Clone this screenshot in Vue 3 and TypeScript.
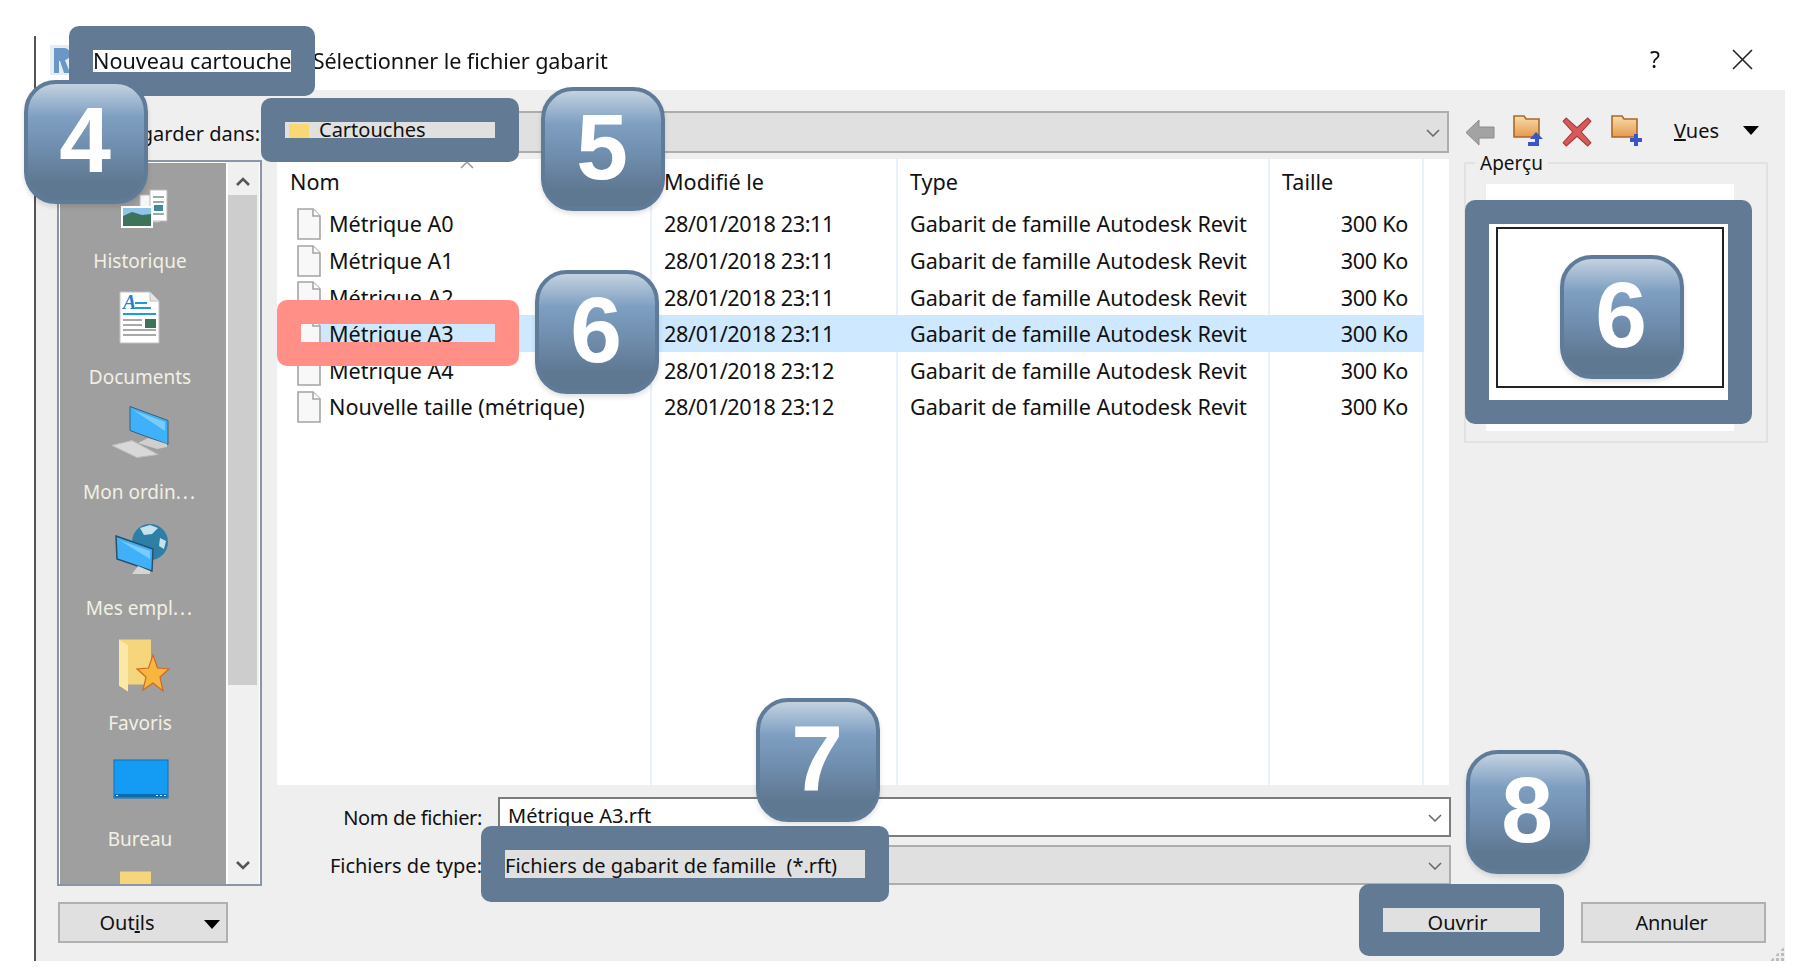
<script setup lang="ts">
interface FileRow {
    name: string;
    date: string;
    selected?: boolean;
}

const files: FileRow[] = [
    { name: "Métrique A0", date: "28/01/2018 23:11" },
    { name: "Métrique A1", date: "28/01/2018 23:11" },
    { name: "Métrique A2", date: "28/01/2018 23:11" },
    { name: "Métrique A3", date: "28/01/2018 23:11", selected: true },
    { name: "Métrique A4", date: "28/01/2018 23:12" },
    { name: "Nouvelle taille (métrique)", date: "28/01/2018 23:12" },
];

const badges = [
    { digit: "4", cls: "b-title" },
    { digit: "5", cls: "b-folder" },
    { digit: "6", cls: "b-file" },
    { digit: "6", cls: "b-preview" },
    { digit: "7", cls: "b-type" },
    { digit: "8", cls: "b-open" },
];

const frames = ["f-title", "f-folder", "f-file", "f-preview", "f-type", "f-open"];
</script>

<template>
    <div class="page">
        <div class="dialog">
            <header class="titlebar">
                <svg class="logo" width="22" height="30" viewBox="0 0 22 30">
                    <rect width="22" height="30" fill="#e6ecf4" />
                    <path d="M4 3h9a6 6 0 0 1 2 12l5 13h-6l-4-12H9v12H4z" fill="#6a96c8" />
                </svg>
                <span class="title-text">Nouveau cartouche - <span class="title-sub">Sélectionner le fichier gabarit</span></span>
                <span class="help">?</span>
                <svg class="close" width="21" height="21" viewBox="0 0 21 21">
                    <path d="M1 1l19 19M20 1L1 20" stroke="#222" stroke-width="1.6" fill="none" />
                </svg>
            </header>

            <div class="body">
                <div class="look-label"><span>Regarder dans:</span></div>
                <div class="combo look-combo">
                    <svg class="mini-folder" width="20" height="16" viewBox="0 0 20 16">
                        <path d="M0 0h20v16H0z" fill="#f8d775" />
                    </svg>
                    <span class="look-value">Cartouches</span>
                    <svg class="chevron" width="14" height="8" viewBox="0 0 14 8">
                        <path d="M1 1l6 6 6-6" fill="none" stroke="#666" stroke-width="1.5" />
                    </svg>
                </div>
                <div class="toolbar">
                    <svg width="30" height="27" viewBox="0 0 30 27">
                        <path d="M1 13.5L14 1v7h15v11H14v7z" fill="#a3a3a3" stroke="#8a8a8a" />
                    </svg>
                    <svg class="tool-folder" width="31" height="31" viewBox="0 0 31 31">
                        <defs>
                            <linearGradient id="folder-fill" x1="0" y1="0" x2="0" y2="1">
                                <stop offset="0" stop-color="#f8dcae" />
                                <stop offset="1" stop-color="#e69a4c" />
                            </linearGradient>
                        </defs>
                        <path d="M1 1h10l2 3h13v18H1z" fill="url(#folder-fill)" stroke="#a8682a" stroke-width="1.6" />
                        <path d="M23 17l7 7h-4v7H15v-4h7v-3h-5z" fill="#3a55c4" />
                    </svg>
                    <svg width="30" height="30" viewBox="0 0 28 28">
                        <path d="M4 1l10 9 10-9 3 3-9 10 9 10-3 3-10-9-10 9-3-3 9-10-9-10z" fill="#d9595a" stroke="#a33c3c" />
                    </svg>
                    <svg class="tool-folder new-folder" width="31" height="31" viewBox="0 0 31 31">
                        <path d="M1 1h10l2 3h13v18H1z" fill="url(#folder-fill)" stroke="#a8682a" stroke-width="1.6" />
                        <path d="M23 19h4v4h4v4h-4v4h-4v-4h-4v-4h4z" fill="#3a55c4" />
                    </svg>
                    <span class="views"><u>V</u>ues</span>
                    <span class="caret views-caret"></span>
                </div>

                <aside class="places">
                    <div class="places-list">
                        <div class="place">
                            <svg width="60" height="60" viewBox="0 0 60 60">
                                <path d="M30 24h20v27H30z" fill="#f6f6f6" stroke="#bbb" />
                                <path d="M40 19h17v31H40z" fill="#fff" stroke="#bbb" />
                                <path d="M43 26h11M43 31h11M43 43h11" stroke="#9aa" stroke-width="2" />
                                <path d="M44 34h9v6h-9z" fill="#3f8a9c" />
                                <rect x="11" y="35" width="32" height="22" fill="#fff" />
                                <path d="M13 37h28v8H13z" fill="#8ec6ea" />
                                <path d="M13 45l9-4 10 3 9-1v12H13z" fill="#3d7358" />
                            </svg>
                            <span>Historique</span>
                        </div>
                        <div class="place">
                            <svg width="60" height="60" viewBox="0 0 60 60">
                                <path d="M10 5h30l9 9v42H10z" fill="#fff" stroke="#c2c2c2" />
                                <path d="M40 5v9h9" fill="#e6e6e6" stroke="#c2c2c2" />
                                <text x="13" y="22" class="doc-a">A</text>
                                <path d="M25 16h12M25 21h16M13 27h33" stroke="#1f9ae0" stroke-width="2" />
                                <path d="M13 33h19M13 38h19M13 43h33M13 48h33" stroke="#a9a9a9" stroke-width="2" />
                                <path d="M35 32h11v9H35z" fill="#3d7358" />
                            </svg>
                            <span>Documents</span>
                        </div>
                        <div class="place">
                            <svg width="60" height="60" viewBox="0 0 60 60">
                                <path d="M20 4.5l38 14v24l-38-14z" fill="#3fb0fa" stroke="#3b5f78" />
                                <path d="M23 8l32 12v9z" fill="#78cbfb" />
                                <path d="M38 36l19 6v3l-10 2-19-6z" fill="#cfcfcf" />
                                <path d="M2 43.5l20-5 26 14-21 3z" fill="#d8d8d8" stroke="#bdbdbd" />
                            </svg>
                            <span>Mon ordin<b class="dots">...</b></span>
                        </div>
                        <div class="place">
                            <svg width="60" height="60" viewBox="0 0 60 60">
                                <circle cx="40" cy="24" r="18" fill="#2d7fa8" />
                                <path d="M30 10l10-3 8 3-6 6-8 1zM50 20l6 3-2 8-5-3z" fill="#c8e2ec" />
                                <path d="M6 18l37 13-1 22L7 41z" fill="#3fb0fa" stroke="#2c4f66" stroke-width="1.5" />
                                <path d="M9 22l31 11v8z" fill="#78cbfb" />
                                <path d="M28 48l12 5v3H22z" fill="#d5d5d5" />
                            </svg>
                            <span>Mes empl<b class="dots">...</b></span>
                        </div>
                        <div class="place">
                            <svg width="60" height="60" viewBox="0 0 60 60">
                                <path d="M9 6.5h32v45H18v7l-9-6z" fill="#f6d67c" />
                                <path d="M9 6.5l9 6v46l-9-6z" fill="#fbe7a6" />
                                <path d="M43 22l4.5 13 11.5 1-9 8 3 14-10-8-10 7 3-13-9-8 11.5-1z" fill="#f5b73d" stroke="#d2691e" stroke-width="1.2" />
                            </svg>
                            <span>Favoris</span>
                        </div>
                        <div class="place">
                            <svg width="60" height="60" viewBox="0 0 60 60">
                                <rect x="4" y="11" width="54" height="38" fill="#149cf5" stroke="#0d70b5" />
                                <path d="M5 45h52v3H5z" fill="#0b6bb0" />
                                <path d="M6 46h2v1H6zM46 46h2v1h-2zM50 46h2v1h-2zM54 46h2v1h-2z" fill="#dff" />
                            </svg>
                            <span>Bureau</span>
                        </div>
                        <div class="place">
                            <svg width="60" height="60" viewBox="0 0 60 60">
                                <path d="M10 7.5h31V40H10z" fill="#f6d67c" />
                            </svg>
                        </div>
                    </div>
                    <div class="places-scroll">
                        <svg class="scroll-up" width="14" height="10" viewBox="0 0 14 10">
                            <path d="M1 8l6-6 6 6" fill="none" stroke="#555" stroke-width="2.6" />
                        </svg>
                        <div class="scroll-thumb"></div>
                        <svg class="scroll-down" width="14" height="10" viewBox="0 0 14 10">
                            <path d="M1 2l6 6 6-6" fill="none" stroke="#555" stroke-width="2.6" />
                        </svg>
                    </div>
                </aside>

                <section class="list">
                    <i class="col-line line-1"></i>
                    <i class="col-line line-2"></i>
                    <i class="col-line line-3"></i>
                    <i class="col-line line-4"></i>
                    <div class="row head">
                        <span class="cell name">Nom</span>
                        <span class="cell">Modifié le</span>
                        <span class="cell">Type</span>
                        <span class="cell">Taille</span>
                    </div>
                    <svg class="sort" width="14" height="8" viewBox="0 0 14 8">
                        <path d="M1 7l6-6 6 6" fill="none" stroke="#999" stroke-width="1.5" />
                    </svg>
                    <div v-for="file in files" :key="file.name" class="row" :class="{ selected: file.selected }">
                        <span class="cell name">
                            <svg class="file-icon" width="24" height="32" viewBox="0 0 24 32">
                                <path d="M1 1h15l7 7v23H1z" fill="#f8f8f8" stroke="#a4a4a4" stroke-width="1.6" />
                                <path d="M16 1v7h7" fill="#fff" stroke="#a4a4a4" stroke-width="1.6" />
                            </svg>
                            {{ file.name }}
                        </span>
                        <span class="cell date">{{ file.date }}</span>
                        <span class="cell">Gabarit de famille Autodesk Revit</span>
                        <span class="cell size">300 Ko</span>
                    </div>
                </section>

                <div class="preview">
                    <span class="preview-legend">Aperçu</span>
                    <div class="preview-sheet">
                        <div class="preview-border"></div>
                    </div>
                </div>

                <div class="field name-field">
                    <label>Nom de fichier:</label>
                    <div class="combo light">
                        <span class="combo-text">Métrique A3.rft</span>
                        <svg class="chevron" width="14" height="8" viewBox="0 0 14 8">
                            <path d="M1 1l6 6 6-6" fill="none" stroke="#666" stroke-width="1.5" />
                        </svg>
                    </div>
                </div>
                <div class="field type-field">
                    <label>Fichiers de type:</label>
                    <div class="combo">
                        <span class="combo-text">Fichiers de gabarit de famille&nbsp; (*.rft)</span>
                        <svg class="chevron" width="14" height="8" viewBox="0 0 14 8">
                            <path d="M1 1l6 6 6-6" fill="none" stroke="#666" stroke-width="1.5" />
                        </svg>
                    </div>
                </div>

                <button class="btn tools">Out<u>i</u>ls<span class="caret tools-caret"></span></button>
                <div class="actions">
                    <button class="btn">Ouvrir</button>
                    <button class="btn cancel">Annuler</button>
                </div>
                <div class="grip"></div>
            </div>
        </div>

        <div v-for="frame in frames" :key="frame" class="frame" :class="frame"></div>
        <div v-for="badge in badges" :key="badge.cls" class="badge" :class="badge.cls">{{ badge.digit }}</div>
    </div>
</template>

<style scoped>
.page {
    position: relative;
    width: 1814px;
    height: 980px;
    box-sizing: border-box;
    padding: 36px 0 0 34px;
    overflow: hidden;
    background: #fff;
    font-family: "Noto Sans", "Open Sans", sans-serif;
    font-size: 20px;
    color: #111;
}

.dialog {
    width: 1751px;
    height: 925px;
    box-sizing: border-box;
    border-left: 2px solid #555;
    filter: blur(0.45px);
}

.titlebar {
    display: flex;
    align-items: center;
    height: 54px;
    padding-left: 14px;
    padding-bottom: 6px;
    box-sizing: border-box;
}

.logo {
    margin-right: 21px;
}

.title-text {
    flex: 1;
    white-space: pre;
    font-size: 21.6px;
}

.title-sub {
    margin-left: 3px;
    letter-spacing: -0.08px;
}

.help {
    width: 20px;
    margin-right: 62px;
    font-size: 23px;
    margin-top: -2px;
}

.close {
    margin-right: 32px;
    margin-top: -2px;
}

.body {
    position: relative;
    display: grid;
    grid-template-columns: 241px 1172px 336px;
    grid-template-rows: 48px 626px 56px 48px 1fr;
    height: 871px;
    box-sizing: border-box;
    padding-top: 21px;
    background: #efefef;
}

.look-label {
    height: 42px;
    display: flex;
    align-items: center;
    justify-content: flex-end;
    padding-right: 17px;
    padding-top: 3px;
    box-sizing: border-box;
    white-space: nowrap;
}

.combo {
    display: flex;
    align-items: center;
    box-sizing: border-box;
    background: #e0e0e0;
    border: 2px solid #adadad;
    position: relative;
    flex: 1;
}

.combo.light {
    background: #fff;
    border-color: #7c7c7c;
}

.look-combo {
    height: 42px;
    padding-left: 10px;
}

.mini-folder {
    margin-right: 10px;
}

.look-value {
    margin-top: -6px;
}

.chevron {
    position: absolute;
    right: 7px;
    top: 50%;
    margin-top: -3px;
}

.toolbar {
    display: flex;
    align-items: center;
    gap: 18px;
    height: 42px;
    padding-left: 16px;
}

.tool-folder {
    margin-top: -3px;
}

.new-folder {
    margin-left: 1px;
}

.views {
    margin-left: 14px;
    margin-right: 5px;
    width: 46px;
    margin-top: -4px;
}

.caret {
    display: inline-block;
    width: 0;
    height: 0;
    border-left: 8px solid transparent;
    border-right: 8px solid transparent;
    border-top: 9px solid #000;
}

.views-caret {
    margin-top: -4px;
}

.places {
    grid-row: 2 / 5;
    display: flex;
    width: 205px;
    height: 726px;
    margin: 1px 0 0 21px;
    box-sizing: border-box;
    border: 2px solid #8a96a5;
    background: #fff;
    overflow: hidden;
}

.places-list {
    width: 166px;
    margin: 1px 0 0 1px;
    padding-top: 8px;
    padding-right: 6px;
    box-sizing: border-box;
    background: #9f9f9f;
    color: #f3f0e4;
    font-size: 19px;
    overflow: hidden;
}

.place {
    display: flex;
    flex-direction: column;
    align-items: center;
    height: 115.5px;
}

.place svg {
    display: block;
    flex: none;
}

.place span {
    margin-top: 15px;
    line-height: 30px;
    white-space: nowrap;
}

.dots {
    font-weight: 400;
    letter-spacing: 2px;
}

.doc-a {
    font-family: "Liberation Serif", serif;
    font-style: italic;
    font-weight: 700;
    font-size: 20px;
    fill: #1f7fd0;
}

.places-scroll {
    position: relative;
    width: 31px;
    margin-left: 2px;
    background: #f0f0f0;
}

.scroll-up,
.scroll-down {
    position: absolute;
    left: 8px;
}

.scroll-up {
    top: 15px;
}

.scroll-down {
    bottom: 14px;
}

.scroll-thumb {
    position: absolute;
    top: 33px;
    left: 0;
    width: 29px;
    height: 490px;
    background: #cdcdcd;
}

.list {
    position: relative;
    background: #fff;
    white-space: nowrap;
    font-size: 21.6px;
}

.col-line {
    position: absolute;
    top: 0;
    bottom: 0;
    width: 2px;
    background: #e9f2fb;
}

.line-1 {
    left: 373px;
}

.line-2 {
    left: 619px;
}

.line-3 {
    left: 991px;
}

.line-4 {
    left: 1145px;
}

.row {
    position: relative;
    display: grid;
    grid-template-columns: 374px 246px 372px 155px;
    width: 1147px;
    height: 36.6px;
    align-items: center;
}

.row.head {
    height: 46.7px;
    padding-bottom: 2px;
    box-sizing: border-box;
}

.row.selected {
    background: #cde8ff;
}

.cell {
    padding-left: 13px;
}

.cell.name {
    display: flex;
    align-items: center;
}

.file-icon {
    margin-left: 7px;
    margin-right: 8px;
}

.cell.date {
    letter-spacing: -0.35px;
}

.cell.size {
    padding-left: 0;
    padding-right: 16px;
    text-align: right;
    letter-spacing: -0.3px;
}

.sort {
    position: absolute;
    left: 183px;
    top: 2px;
}

.preview {
    position: relative;
    width: 304px;
    height: 281px;
    margin: 3px 0 0 15px;
    box-sizing: border-box;
    border: 2px solid #e2e2e2;
    padding: 20px 32px 10px 20px;
}

.preview-legend {
    position: absolute;
    left: 9px;
    top: -14px;
    padding: 0 5px;
    background: #efefef;
    font-size: 19px;
}

.preview-sheet {
    height: 247px;
    padding-top: 43px;
    padding-left: 10px;
    box-sizing: border-box;
    background: #fff;
}

.preview-border {
    width: 228px;
    height: 161px;
    box-sizing: border-box;
    border: 2px solid #222;
}

.field {
    display: flex;
    align-items: center;
    gap: 16px;
    grid-column: 2;
    margin-right: -2px;
}

.name-field {
    height: 40px;
    margin-top: 12px;
}

.name-field label {
    letter-spacing: -0.35px;
}

.type-field {
    height: 40px;
    margin-top: 4px;
}

.field label {
    width: 205px;
    text-align: right;
    white-space: nowrap;
}

.field .combo {
    height: 100%;
}

.combo-text {
    padding-left: 8px;
}

.name-field .combo-text {
    margin-top: -4px;
}

.type-field .combo-text {
    padding-left: 5px;
}

.btn {
    position: relative;
    box-sizing: border-box;
    height: 41px;
    background: #e0e0e0;
    border: 2px solid #b0b0b0;
    font: inherit;
    color: inherit;
    padding: 0;
}

.tools {
    grid-row: 5;
    grid-column: 1;
    width: 170px;
    margin: 13px 0 0 22px;
    padding-right: 32px;
    align-self: start;
}

.tools-caret {
    position: absolute;
    right: 6px;
    top: 16px;
}

.actions {
    grid-row: 5;
    grid-column: 2 / 4;
    display: flex;
    justify-content: flex-end;
    align-items: flex-start;
    gap: 31px;
    padding: 13px 19px 0 0;
}

.actions .btn {
    width: 185px;
}

.actions .cancel {
    padding-right: 4px;
    letter-spacing: -0.4px;
}

.grip {
    position: absolute;
    right: 1px;
    bottom: 0;
    width: 14px;
    height: 14px;
    background-image: radial-gradient(circle, #bcbcbc 2px, transparent 2px);
    background-size: 5px 5px;
    clip-path: polygon(100% 0, 100% 100%, 0 100%);
}

.frame {
    position: absolute;
    box-sizing: border-box;
    border: 24px solid #627a94;
    border-radius: 10px;
}

.f-title {
    left: 69px;
    top: 26px;
    width: 246px;
    height: 70px;
}

.f-folder {
    left: 261px;
    top: 98px;
    width: 258px;
    height: 64px;
}

.f-file {
    left: 277px;
    top: 300px;
    width: 242px;
    height: 66px;
    border-color: #ff8f87;
}

.f-preview {
    left: 1465px;
    top: 200px;
    width: 287px;
    height: 224px;
}

.f-type {
    left: 481px;
    top: 826px;
    width: 408px;
    height: 76px;
}

.f-open {
    left: 1359px;
    top: 884px;
    width: 205px;
    height: 72px;
}

.badge {
    position: absolute;
    width: 124px;
    height: 124px;
    box-sizing: border-box;
    border: 4px solid #5f7b98;
    border-radius: 32px;
    background: linear-gradient(#c3d2e0 0%, #7f9fc2 28%, #7291b2 50%, #5f7892 85%, #5f7892 100%);
    box-shadow: 0 3px 5px rgba(0, 0, 0, 0.12);
    display: flex;
    align-items: center;
    justify-content: center;
    padding: 0 2px 3px 0;
    color: #fff;
    font-family: "Liberation Sans", Arial, sans-serif;
    font-weight: 700;
    font-size: 93px;
    line-height: 1;
}

.b-title {
    left: 24px;
    top: 80px;
}

.b-folder {
    left: 541px;
    top: 87px;
}

.b-file {
    left: 535px;
    top: 270px;
}

.b-preview {
    left: 1560px;
    top: 255px;
}

.b-type {
    left: 756px;
    top: 698px;
}

.b-open {
    left: 1466px;
    top: 750px;
}
</style>
